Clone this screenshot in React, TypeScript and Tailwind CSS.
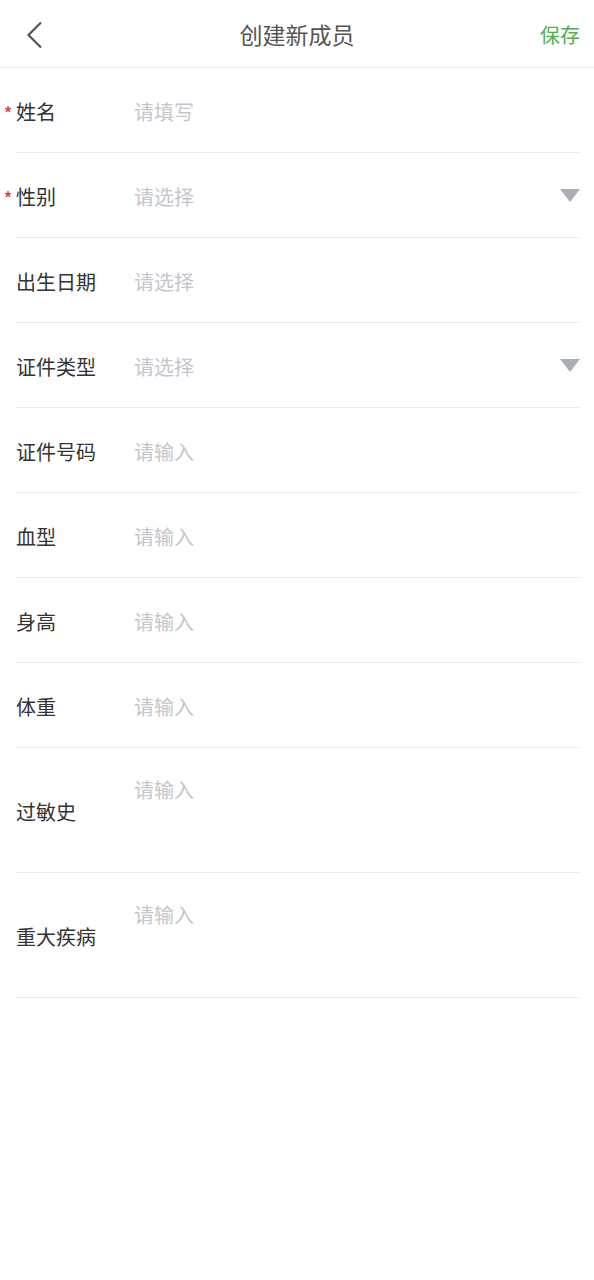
import React from "react";

type Field = { label: string; placeholder: string; required?: boolean; select?: boolean; multi?: boolean };

const fields: Field[] = [
  { label: "姓名", placeholder: "请填写", required: true },
  { label: "性别", placeholder: "请选择", required: true, select: true },
  { label: "出生日期", placeholder: "请选择" },
  { label: "证件类型", placeholder: "请选择", select: true },
  { label: "证件号码", placeholder: "请输入" },
  { label: "血型", placeholder: "请输入" },
  { label: "身高", placeholder: "请输入" },
  { label: "体重", placeholder: "请输入" },
  { label: "过敏史", placeholder: "请输入", multi: true },
  { label: "重大疾病", placeholder: "请输入", multi: true },
];

function Row({ f }: { f: Field }) {
  if (f.multi) {
    return (
      <div className="relative flex h-[125px] border-b border-[#ececec]">
        <div className="flex w-[118px] shrink-0 items-center pt-[3px] text-[20px] text-[#333]">{f.label}</div>
        <div className="pt-[30px] text-[20px] leading-[24px] text-[#c3c6cc]">{f.placeholder}</div>
      </div>
    );
  }
  return (
    <div className="relative flex h-[85px] items-center border-b border-[#ececec] pt-[3px]">
      {f.required && (
        <span className="absolute left-[-12px] top-[36px] text-[16px] font-bold leading-none text-[#e0474a]">*</span>
      )}
      <div className="w-[118px] shrink-0 text-[20px] text-[#333]">{f.label}</div>
      <div className="flex-1 text-[20px] text-[#c3c6cc]">{f.placeholder}</div>
      {f.select && (
        <svg width="20" height="13" viewBox="0 0 20 13" className="mb-[3px]">
          <polygon points="0,0 20,0 10,13" fill="#a9aeb8" />
        </svg>
      )}
    </div>
  );
}

export default function App() {
  return (
    <div
      className="min-h-[1280px] w-[594px] bg-white"
      style={{ fontFamily: '"Noto Sans CJK SC", "Noto Sans", sans-serif' }}
    >
      <div className="flex h-[68px] items-center justify-between border-b border-[#ececec] px-[14px] pt-[2px]">
        <div className="flex w-[60px] items-center pl-[12px]">
          <svg width="18" height="28" viewBox="0 0 18 28">
            <polyline points="15,1.5 2.5,14 15,26.5" fill="none" stroke="#555" strokeWidth="2.2" />
          </svg>
        </div>
        <div className="text-[23px] text-[#555]">创建新成员</div>
        <div className="flex w-[60px] justify-end text-[20px] text-[#4caf50]">保存</div>
      </div>
      <div className="pl-[16px] pr-[14px]">
        {fields.map((f) => (
          <Row key={f.label} f={f} />
        ))}
      </div>
    </div>
  );
}
